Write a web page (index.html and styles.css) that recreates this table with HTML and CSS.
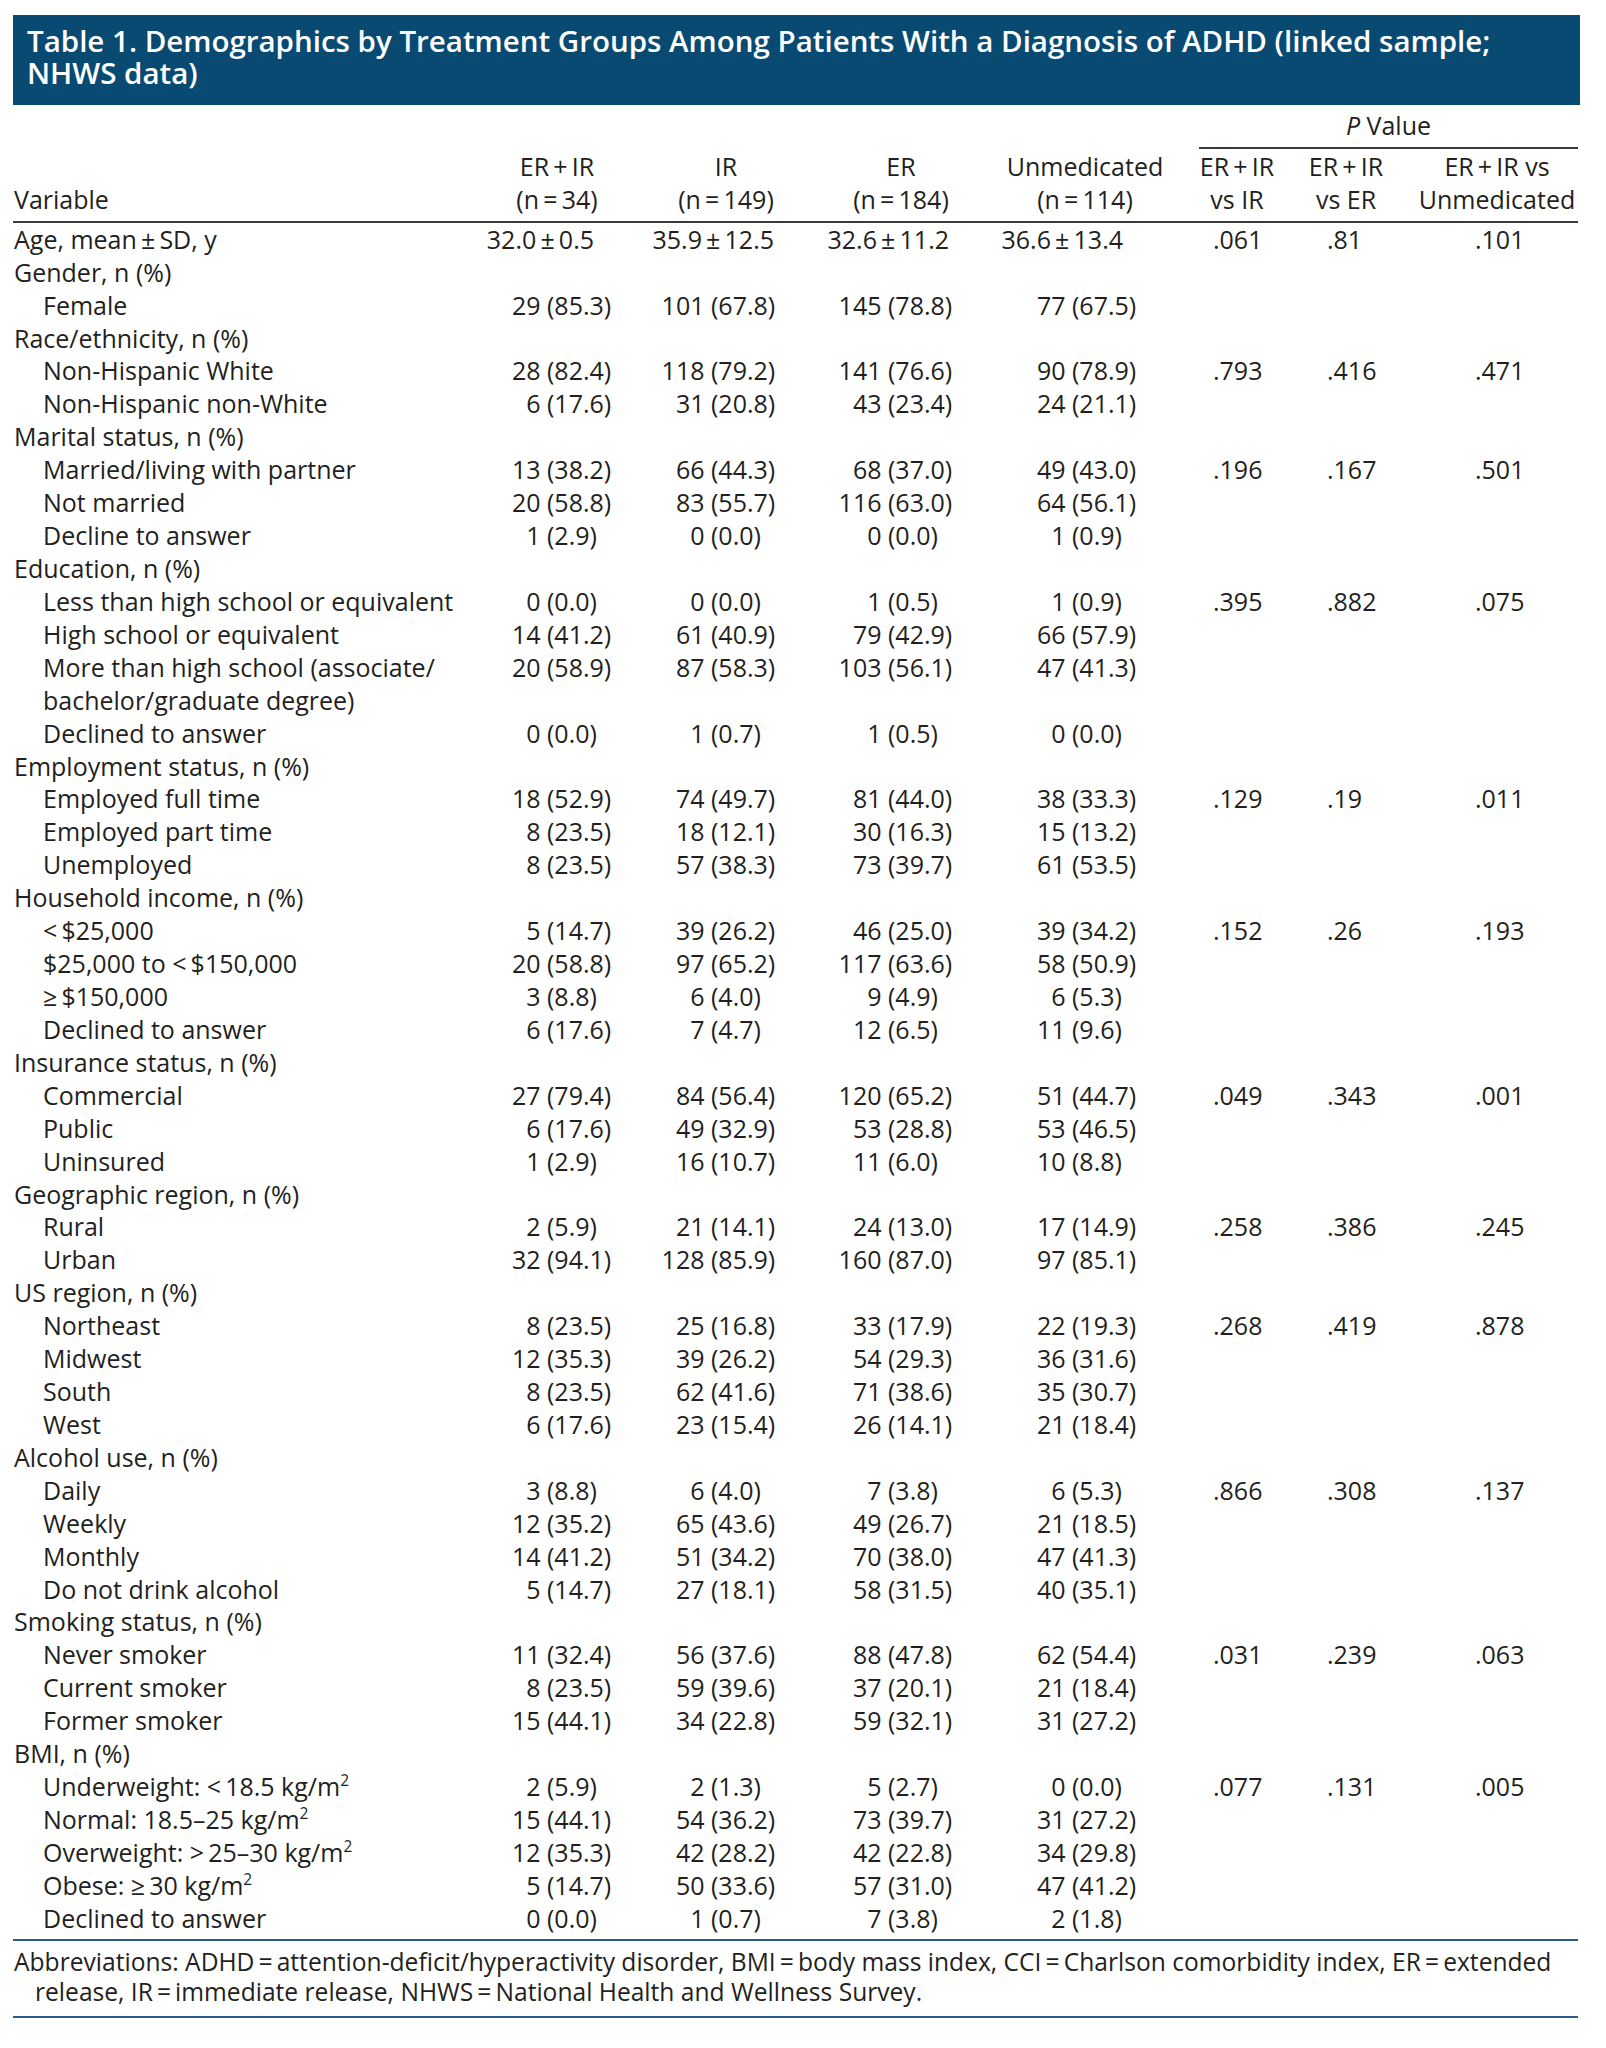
FILE: index.html
```html
<!DOCTYPE html>
<html lang="en">
<head>
<meta charset="utf-8">
<title>Table 1. Demographics by Treatment Groups</title>
<link rel="stylesheet" href="styles.css">
</head>
<body>
<div class="page">
  <h1 class="title"><span class="tl">Table 1. Demographics by Treatment Groups Among Patients With a Diagnosis of ADHD (linked sample;</span><span class="tl">NHWS data)</span></h1>
  <div class="wrap">
    <table class="t">
      <colgroup>
        <col class="w-var"><col class="w-c1"><col class="w-c2"><col class="w-c3"><col class="w-c4"><col class="w-p1"><col class="w-p2"><col class="w-p3">
      </colgroup>
      <thead>
        <tr class="ph">
          <td colspan="5"></td>
          <td colspan="3"><div class="pval"><i>P</i> Value</div></td>
        </tr>
        <tr class="hd">
          <td>Variable</td>
          <td>ER&thinsp;+&thinsp;IR<br>(n&thinsp;=&thinsp;34)</td>
          <td>IR<br>(n&thinsp;=&thinsp;149)</td>
          <td>ER<br>(n&thinsp;=&thinsp;184)</td>
          <td>Unmedicated<br>(n&thinsp;=&thinsp;114)</td>
          <td>ER&thinsp;+&thinsp;IR<br>vs IR</td>
          <td>ER&thinsp;+&thinsp;IR<br>vs ER</td>
          <td>ER&thinsp;+&thinsp;IR vs<br>Unmedicated</td>
        </tr>
      </thead>
      <tbody>
        <tr class="age"><td>Age, mean&thinsp;±&thinsp;SD, y</td><td>32.0&thinsp;±&thinsp;0.5</td><td>35.9&thinsp;±&thinsp;12.5</td><td>32.6&thinsp;±&thinsp;11.2</td><td>36.6&thinsp;±&thinsp;13.4</td><td>.061</td><td>.81</td><td>.101</td></tr>

        <tr class="g"><td colspan="8">Gender, n (%)</td></tr>
        <tr class="s"><td>Female</td><td>29 <span class="p">(85.3)</span></td><td>101 <span class="p">(67.8)</span></td><td>145 <span class="p">(78.8)</span></td><td>77 <span class="p">(67.5)</span></td><td></td><td></td><td></td></tr>

        <tr class="g"><td colspan="8">Race/ethnicity, n (%)</td></tr>
        <tr class="s"><td>Non-Hispanic White</td><td>28 <span class="p">(82.4)</span></td><td>118 <span class="p">(79.2)</span></td><td>141 <span class="p">(76.6)</span></td><td>90 <span class="p">(78.9)</span></td><td>.793</td><td>.416</td><td>.471</td></tr>
        <tr class="s"><td>Non-Hispanic non-White</td><td>6 <span class="p">(17.6)</span></td><td>31 <span class="p">(20.8)</span></td><td>43 <span class="p">(23.4)</span></td><td>24 <span class="p">(21.1)</span></td><td></td><td></td><td></td></tr>

        <tr class="g"><td colspan="8">Marital status, n (%)</td></tr>
        <tr class="s"><td>Married/living with partner</td><td>13 <span class="p">(38.2)</span></td><td>66 <span class="p">(44.3)</span></td><td>68 <span class="p">(37.0)</span></td><td>49 <span class="p">(43.0)</span></td><td>.196</td><td>.167</td><td>.501</td></tr>
        <tr class="s"><td>Not married</td><td>20 <span class="p">(58.8)</span></td><td>83 <span class="p">(55.7)</span></td><td>116 <span class="p">(63.0)</span></td><td>64 <span class="p">(56.1)</span></td><td></td><td></td><td></td></tr>
        <tr class="s"><td>Decline to answer</td><td>1 <span class="p">(2.9)</span></td><td>0 <span class="p">(0.0)</span></td><td>0 <span class="p">(0.0)</span></td><td>1 <span class="p">(0.9)</span></td><td></td><td></td><td></td></tr>

        <tr class="g"><td colspan="8">Education, n (%)</td></tr>
        <tr class="s"><td>Less than high school or equivalent</td><td>0 <span class="p">(0.0)</span></td><td>0 <span class="p">(0.0)</span></td><td>1 <span class="p">(0.5)</span></td><td>1 <span class="p">(0.9)</span></td><td>.395</td><td>.882</td><td>.075</td></tr>
        <tr class="s"><td>High school or equivalent</td><td>14 <span class="p">(41.2)</span></td><td>61 <span class="p">(40.9)</span></td><td>79 <span class="p">(42.9)</span></td><td>66 <span class="p">(57.9)</span></td><td></td><td></td><td></td></tr>
        <tr class="s"><td>More than high school (associate/<br>bachelor/graduate degree)</td><td>20 <span class="p">(58.9)</span></td><td>87 <span class="p">(58.3)</span></td><td>103 <span class="p">(56.1)</span></td><td>47 <span class="p">(41.3)</span></td><td></td><td></td><td></td></tr>
        <tr class="s"><td>Declined to answer</td><td>0 <span class="p">(0.0)</span></td><td>1 <span class="p">(0.7)</span></td><td>1 <span class="p">(0.5)</span></td><td>0 <span class="p">(0.0)</span></td><td></td><td></td><td></td></tr>

        <tr class="g"><td colspan="8">Employment status, n (%)</td></tr>
        <tr class="s"><td>Employed full time</td><td>18 <span class="p">(52.9)</span></td><td>74 <span class="p">(49.7)</span></td><td>81 <span class="p">(44.0)</span></td><td>38 <span class="p">(33.3)</span></td><td>.129</td><td>.19</td><td>.011</td></tr>
        <tr class="s"><td>Employed part time</td><td>8 <span class="p">(23.5)</span></td><td>18 <span class="p">(12.1)</span></td><td>30 <span class="p">(16.3)</span></td><td>15 <span class="p">(13.2)</span></td><td></td><td></td><td></td></tr>
        <tr class="s"><td>Unemployed</td><td>8 <span class="p">(23.5)</span></td><td>57 <span class="p">(38.3)</span></td><td>73 <span class="p">(39.7)</span></td><td>61 <span class="p">(53.5)</span></td><td></td><td></td><td></td></tr>

        <tr class="g"><td colspan="8">Household income, n (%)</td></tr>
        <tr class="s"><td>&lt;&thinsp;$25,000</td><td>5 <span class="p">(14.7)</span></td><td>39 <span class="p">(26.2)</span></td><td>46 <span class="p">(25.0)</span></td><td>39 <span class="p">(34.2)</span></td><td>.152</td><td>.26</td><td>.193</td></tr>
        <tr class="s"><td>$25,000 to &lt;&thinsp;$150,000</td><td>20 <span class="p">(58.8)</span></td><td>97 <span class="p">(65.2)</span></td><td>117 <span class="p">(63.6)</span></td><td>58 <span class="p">(50.9)</span></td><td></td><td></td><td></td></tr>
        <tr class="s"><td>≥&thinsp;$150,000</td><td>3 <span class="p">(8.8)</span></td><td>6 <span class="p">(4.0)</span></td><td>9 <span class="p">(4.9)</span></td><td>6 <span class="p">(5.3)</span></td><td></td><td></td><td></td></tr>
        <tr class="s"><td>Declined to answer</td><td>6 <span class="p">(17.6)</span></td><td>7 <span class="p">(4.7)</span></td><td>12 <span class="p">(6.5)</span></td><td>11 <span class="p">(9.6)</span></td><td></td><td></td><td></td></tr>

        <tr class="g"><td colspan="8">Insurance status, n (%)</td></tr>
        <tr class="s"><td>Commercial</td><td>27 <span class="p">(79.4)</span></td><td>84 <span class="p">(56.4)</span></td><td>120 <span class="p">(65.2)</span></td><td>51 <span class="p">(44.7)</span></td><td>.049</td><td>.343</td><td>.001</td></tr>
        <tr class="s"><td>Public</td><td>6 <span class="p">(17.6)</span></td><td>49 <span class="p">(32.9)</span></td><td>53 <span class="p">(28.8)</span></td><td>53 <span class="p">(46.5)</span></td><td></td><td></td><td></td></tr>
        <tr class="s"><td>Uninsured</td><td>1 <span class="p">(2.9)</span></td><td>16 <span class="p">(10.7)</span></td><td>11 <span class="p">(6.0)</span></td><td>10 <span class="p">(8.8)</span></td><td></td><td></td><td></td></tr>

        <tr class="g"><td colspan="8">Geographic region, n (%)</td></tr>
        <tr class="s"><td>Rural</td><td>2 <span class="p">(5.9)</span></td><td>21 <span class="p">(14.1)</span></td><td>24 <span class="p">(13.0)</span></td><td>17 <span class="p">(14.9)</span></td><td>.258</td><td>.386</td><td>.245</td></tr>
        <tr class="s"><td>Urban</td><td>32 <span class="p">(94.1)</span></td><td>128 <span class="p">(85.9)</span></td><td>160 <span class="p">(87.0)</span></td><td>97 <span class="p">(85.1)</span></td><td></td><td></td><td></td></tr>

        <tr class="g"><td colspan="8">US region, n (%)</td></tr>
        <tr class="s"><td>Northeast</td><td>8 <span class="p">(23.5)</span></td><td>25 <span class="p">(16.8)</span></td><td>33 <span class="p">(17.9)</span></td><td>22 <span class="p">(19.3)</span></td><td>.268</td><td>.419</td><td>.878</td></tr>
        <tr class="s"><td>Midwest</td><td>12 <span class="p">(35.3)</span></td><td>39 <span class="p">(26.2)</span></td><td>54 <span class="p">(29.3)</span></td><td>36 <span class="p">(31.6)</span></td><td></td><td></td><td></td></tr>
        <tr class="s"><td>South</td><td>8 <span class="p">(23.5)</span></td><td>62 <span class="p">(41.6)</span></td><td>71 <span class="p">(38.6)</span></td><td>35 <span class="p">(30.7)</span></td><td></td><td></td><td></td></tr>
        <tr class="s"><td>West</td><td>6 <span class="p">(17.6)</span></td><td>23 <span class="p">(15.4)</span></td><td>26 <span class="p">(14.1)</span></td><td>21 <span class="p">(18.4)</span></td><td></td><td></td><td></td></tr>

        <tr class="g"><td colspan="8">Alcohol use, n (%)</td></tr>
        <tr class="s"><td>Daily</td><td>3 <span class="p">(8.8)</span></td><td>6 <span class="p">(4.0)</span></td><td>7 <span class="p">(3.8)</span></td><td>6 <span class="p">(5.3)</span></td><td>.866</td><td>.308</td><td>.137</td></tr>
        <tr class="s"><td>Weekly</td><td>12 <span class="p">(35.2)</span></td><td>65 <span class="p">(43.6)</span></td><td>49 <span class="p">(26.7)</span></td><td>21 <span class="p">(18.5)</span></td><td></td><td></td><td></td></tr>
        <tr class="s"><td>Monthly</td><td>14 <span class="p">(41.2)</span></td><td>51 <span class="p">(34.2)</span></td><td>70 <span class="p">(38.0)</span></td><td>47 <span class="p">(41.3)</span></td><td></td><td></td><td></td></tr>
        <tr class="s"><td>Do not drink alcohol</td><td>5 <span class="p">(14.7)</span></td><td>27 <span class="p">(18.1)</span></td><td>58 <span class="p">(31.5)</span></td><td>40 <span class="p">(35.1)</span></td><td></td><td></td><td></td></tr>

        <tr class="g"><td colspan="8">Smoking status, n (%)</td></tr>
        <tr class="s"><td>Never smoker</td><td>11 <span class="p">(32.4)</span></td><td>56 <span class="p">(37.6)</span></td><td>88 <span class="p">(47.8)</span></td><td>62 <span class="p">(54.4)</span></td><td>.031</td><td>.239</td><td>.063</td></tr>
        <tr class="s"><td>Current smoker</td><td>8 <span class="p">(23.5)</span></td><td>59 <span class="p">(39.6)</span></td><td>37 <span class="p">(20.1)</span></td><td>21 <span class="p">(18.4)</span></td><td></td><td></td><td></td></tr>
        <tr class="s"><td>Former smoker</td><td>15 <span class="p">(44.1)</span></td><td>34 <span class="p">(22.8)</span></td><td>59 <span class="p">(32.1)</span></td><td>31 <span class="p">(27.2)</span></td><td></td><td></td><td></td></tr>

        <tr class="g"><td colspan="8">BMI, n (%)</td></tr>
        <tr class="s"><td>Underweight: &lt;&thinsp;18.5 kg/m<sup>2</sup></td><td>2 <span class="p">(5.9)</span></td><td>2 <span class="p">(1.3)</span></td><td>5 <span class="p">(2.7)</span></td><td>0 <span class="p">(0.0)</span></td><td>.077</td><td>.131</td><td>.005</td></tr>
        <tr class="s"><td>Normal: 18.5–25 kg/m<sup>2</sup></td><td>15 <span class="p">(44.1)</span></td><td>54 <span class="p">(36.2)</span></td><td>73 <span class="p">(39.7)</span></td><td>31 <span class="p">(27.2)</span></td><td></td><td></td><td></td></tr>
        <tr class="s"><td>Overweight: &gt;&thinsp;25–30 kg/m<sup>2</sup></td><td>12 <span class="p">(35.3)</span></td><td>42 <span class="p">(28.2)</span></td><td>42 <span class="p">(22.8)</span></td><td>34 <span class="p">(29.8)</span></td><td></td><td></td><td></td></tr>
        <tr class="s"><td>Obese: ≥&thinsp;30 kg/m<sup>2</sup></td><td>5 <span class="p">(14.7)</span></td><td>50 <span class="p">(33.6)</span></td><td>57 <span class="p">(31.0)</span></td><td>47 <span class="p">(41.2)</span></td><td></td><td></td><td></td></tr>
        <tr class="s last"><td>Declined to answer</td><td>0 <span class="p">(0.0)</span></td><td>1 <span class="p">(0.7)</span></td><td>7 <span class="p">(3.8)</span></td><td>2 <span class="p">(1.8)</span></td><td></td><td></td><td></td></tr>
      </tbody>
    </table>
    <p class="fn">Abbreviations: ADHD&thinsp;=&thinsp;attention-deficit/hyperactivity disorder, BMI&thinsp;=&thinsp;body mass index, CCI&thinsp;=&thinsp;Charlson comorbidity index, ER&thinsp;=&thinsp;extended<br>release, IR&thinsp;=&thinsp;immediate release, NHWS&thinsp;=&thinsp;National Health and Wellness Survey.</p>
  </div>
</div>
</body>
</html>
```
FILE: styles.css
```css
html, body {
  margin: 0;
  padding: 0;
  background: #ffffff;
}

body {
  font-family: "Open Sans", "Liberation Sans", sans-serif;
  color: #231f20;
}

.page {
  padding: 15px 0 0 13px;
}

.title {
  box-sizing: border-box;
  display: flex;
  flex-direction: column;
  width: 1567px;
  height: 90px;
  margin: 0;
  padding: 10px 14px 0;
  background: #094a73;
  color: #ffffff;
  font-size: 29.5px;
  font-weight: 600;
  white-space: nowrap;
}

.tl {
  display: block;
  height: 32px;
  line-height: 32px;
}

.wrap {
  width: 1565px;
}

.t {
  width: 1565px;
  table-layout: fixed;
  border-collapse: separate;
  border-spacing: 0;
  margin-top: 4px;
  font-size: 25px;
  font-variant-numeric: tabular-nums;
}

.w-var { width: 457px; }
.w-c1 { width: 174px; }
.w-c2 { width: 164px; }
.w-c3 { width: 186px; }
.w-c4 { width: 182px; }
.w-p1 { width: 122px; }
.w-p2 { width: 96px; }
.w-p3 { width: 184px; }

.t td {
  padding: 0;
  vertical-align: top;
  line-height: 32.92px;
  white-space: nowrap;
}

/* header */
.pval {
  margin-left: 23px;
  padding-bottom: 5px;
  border-bottom: 2px solid #3a3a3a;
  text-align: center;
  line-height: 32.92px;
}

.hd td {
  padding: 1px 0 5px;
  text-align: center;
  vertical-align: bottom;
  border-bottom: 2px solid #3a3a3a;
}

.hd td:first-child {
  text-align: left;
  padding-left: 1px;
}

.hd td:last-child {
  padding-left: 22px;
}

/* body */
tbody td:first-child {
  padding-left: 1px;
}

.s td:first-child {
  padding-left: 30px;
}

tbody td:nth-child(2),
tbody td:nth-child(3),
tbody td:nth-child(4),
tbody td:nth-child(5) {
  text-align: right;
}

tbody td:nth-child(2) { padding-right: 33px; }
tbody td:nth-child(3) { padding-right: 33px; }
tbody td:nth-child(4) { padding-right: 42px; }
tbody td:nth-child(5) { padding-right: 40px; }
tbody td:nth-child(6) { padding-left: 37px; }
tbody td:nth-child(7) { padding-left: 29px; }
tbody td:nth-child(8) { padding-left: 81px; }

.age td:nth-child(2) { padding-right: 50px; }
.age td:nth-child(3) { padding-right: 34px; }
.age td:nth-child(4) { padding-right: 45px; }
.age td:nth-child(5) { padding-right: 53px; }

.g td:first-child {
  padding-left: 1px;
}

.p {
  display: inline-block;
  width: 64px;
  text-align: left;
}

sup {
  font-size: 0.62em;
  line-height: 0;
  vertical-align: 0.62em;
}

.last td {
  padding-bottom: 4px;
  border-bottom: 2px solid #2c5d8c;
}

/* footnote */
.fn {
  margin: 0;
  padding: 6px 0 9px 22px;
  text-indent: -21px;
  font-size: 24.6px;
  line-height: 30px;
  white-space: nowrap;
  border-bottom: 2px solid #2c5d8c;
}
```
